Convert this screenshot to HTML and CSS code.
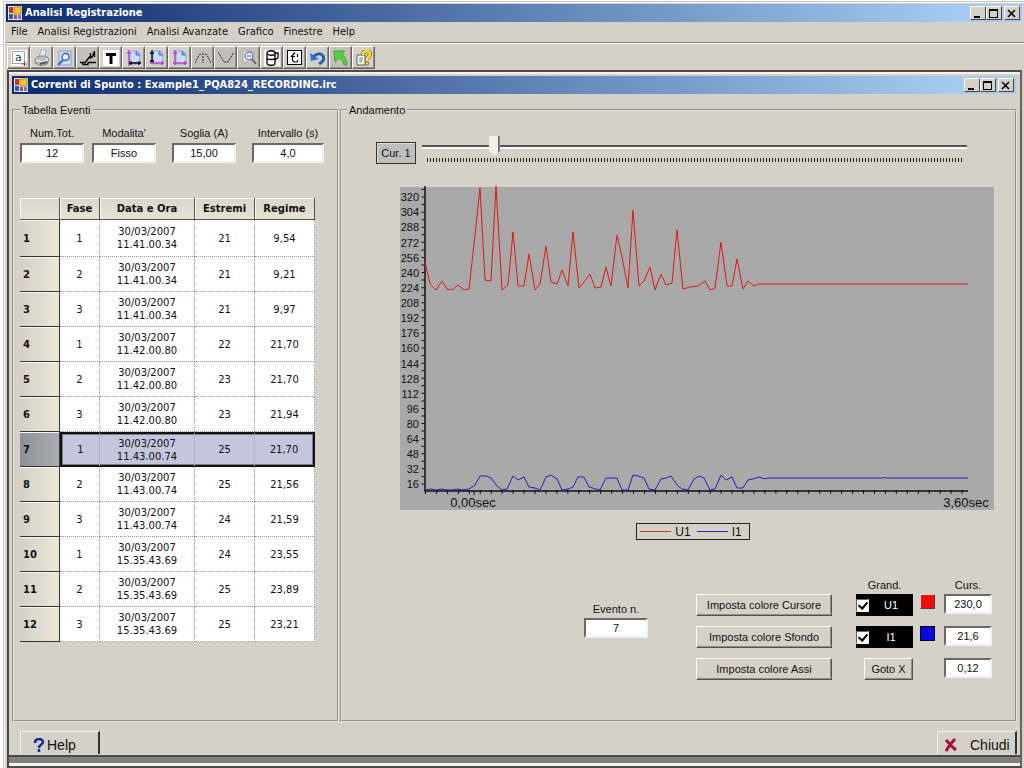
FILE: index.html
```html
<!DOCTYPE html>
<html lang="it">
<head>
<meta charset="utf-8">
<title>Analisi Registrazione</title>
<link rel="stylesheet" href="styles.css">
</head>
<body>
<svg class="defs" aria-hidden="true">
  <symbol id="app-icon" viewBox="0 0 14 14">
    <rect width="14" height="14" fill="#e8e8f0"/>
    <rect x="1" y="1" width="4" height="6" fill="#c8341e"/><rect x="1" y="8" width="4" height="5" fill="#2a57c8"/>
    <rect x="6" y="1" width="7" height="7" fill="#f5c43a" stroke="#b98513"/><rect x="6" y="9" width="3" height="4" fill="#c23a5a"/><rect x="10" y="9" width="3" height="4" fill="#5c77d8"/>
  </symbol>
  <symbol id="min-icon" viewBox="0 0 10 9"><path d="M1 7h6v2H1z"/></symbol>
  <symbol id="max-icon" viewBox="0 0 10 9"><path d="M0 0h9v9H0zM1 2v6h7V2z" fill-rule="evenodd"/></symbol>
  <symbol id="close-icon" viewBox="0 0 10 9"><path d="M1 1l7 7M8 1l-7 7" stroke="#000" stroke-width="1.600" fill="none"/></symbol>
  <symbol id="page-shape" viewBox="0 0 16 16"><path d="M4 1h7l3 3v10H4z" fill="#c8dcfc" stroke="#8fa9e6"/><path d="M10 1v4h4" fill="#6c90e8" stroke="#5878d8"/></symbol>
</svg>
<div class="app">
  <header class="titlebar">
    <svg class="app-icon"><use href="#app-icon"/></svg>
    <h1 class="title">Analisi Registrazione</h1>
    <div class="controls">
      <button class="ctl" aria-label="Riduci"><svg><use href="#min-icon"/></svg></button>
      <button class="ctl" aria-label="Ingrandisci"><svg><use href="#max-icon"/></svg></button>
      <button class="ctl close" aria-label="Chiudi"><svg><use href="#close-icon"/></svg></button>
    </div>
  </header>
  <nav class="menu">
    <button>File</button><button>Analisi Registrazioni</button><button>Analisi Avanzate</button><button>Grafico</button><button>Finestre</button><button>Help</button>
  </nav>
  <div class="toolbar" role="toolbar" aria-label="Strumenti">
    <button class="tool" aria-label="Seleziona"><svg viewBox="0 0 16 16"><rect width="16" height="16" fill="#fff"/><rect x="1.500" y="1.500" width="12" height="12" fill="none" stroke="#334b86" stroke-dasharray="1 1"/><text x="4" y="11" class="glyph-a">a</text><path d="M11 14h5M13.500 11.500v5" stroke="#b03030"/></svg></button>
    <button class="tool" aria-label="Stampa"><svg viewBox="0 0 16 16"><path d="M5 7L7 0h5l-1 7" fill="#e3eaff" stroke="#9aa9d8"/><path d="M1 9l4-3h7l3 3-2 5-5 2-7-3z" fill="#b8bcc4" stroke="#7f858f"/><path d="M2 10l7 2 5-3" fill="none" stroke="#fff"/><path d="M6 14l7-2" stroke="#555" stroke-width="2"/></svg></button>
    <button class="tool" aria-label="Anteprima"><svg viewBox="0 0 16 16"><path d="M2 1h12v14H2z" fill="#cfe2fc" stroke="#7a9fe0"/><path d="M11 1v3h3" stroke="#7a9fe0" fill="#fff"/><circle cx="8.500" cy="7" r="3.500" fill="#eef8ff" stroke="#3867bd" stroke-width="1.500"/><path d="M6 10l-5 5" stroke="#3867bd" stroke-width="2"/></svg></button>
    <button class="tool dim" aria-label="Evento"><svg viewBox="0 0 16 16"><path d="M0 12.500h5l5-6h3M3 12.500v2h5v-2h8M10.500 3v6M12 8l2-6M14.500 1v6" fill="none" stroke="#000" stroke-width="1.300"/></svg></button>
    <button class="tool" aria-label="Testo"><svg viewBox="0 0 16 16"><rect width="16" height="16" fill="#fff"/><path d="M3 3h10v3h-3.500v8h-3V6H3z"/></svg></button>
    <button class="tool" aria-label="Asse X"><svg viewBox="0 0 16 16"><use href="#page-shape"/><path d="M3 0v16M1 3h4" stroke="#c040c8" stroke-width="1.500"/><path d="M3 13h12M5 11v4M13 11v4" stroke="#000" stroke-width="1.300"/></svg></button>
    <button class="tool" aria-label="Asse Y"><svg viewBox="0 0 16 16"><use href="#page-shape"/><path d="M3 0v13M1 3h4M1 11h4" stroke="#000" stroke-width="1.300"/><path d="M1 13h14M13 11v4" stroke="#c040c8" stroke-width="1.500"/></svg></button>
    <button class="tool" aria-label="Assi"><svg viewBox="0 0 16 16"><use href="#page-shape"/><path d="M3 0v15M1 3h4M1 13h14M13 11v4" stroke="#c040c8" stroke-width="1.500"/></svg></button>
    <button class="tool dim" aria-label="Massimo"><svg viewBox="0 0 16 16"><path d="M0 13l4-8 2-1M16 13l-4-8-2-1M8 3v10" fill="none" stroke="#222" stroke-dasharray="2 1"/></svg></button>
    <button class="tool dim" aria-label="Minimo"><svg viewBox="0 0 16 16"><path d="M0 2l6 10h4l6-10" fill="none" stroke="#222" stroke-dasharray="2 1"/></svg></button>
    <button class="tool dim" aria-label="Zoom"><svg viewBox="0 0 16 16"><path d="M2 1h8v11H2z" fill="#eee" stroke="#aaa"/><circle cx="8" cy="6" r="4" fill="#dcecff" stroke="#7186aa" stroke-width="1.500"/><path d="M6 6h4" stroke="#668"/><path d="M11 9l4 5" stroke="#5d6470" stroke-width="2"/></svg></button>
    <button class="tool" aria-label="Memoria"><svg viewBox="0 0 16 16"><rect width="16" height="16" fill="#fff"/><path d="M3 3v10c0 3 8 3 8 0V3M3 3c0-3 8-3 8 0s-8 3-8 0M3 8c0 2 8 2 8 0M11 3h3v5l-3 2" fill="none" stroke="#000" stroke-width="1.300"/></svg></button>
    <button class="tool" aria-label="Strumento"><svg viewBox="0 0 16 16"><rect x=".5" y=".5" width="14" height="14" fill="#fff" stroke="#000"/><path d="M8 2.500L4.500 6.500H8M5.500 6.500v4l1.500 1.500h3l1-2M10.500 4v3" fill="none" stroke="#000" stroke-width="1.200"/></svg></button>
    <button class="tool" aria-label="Annulla"><svg viewBox="0 0 16 16"><path d="M3 7c4-4 8-4 10-1 2 4-1 6-4 8" fill="none" stroke="#1d62b5" stroke-width="3"/><path d="M0 3l1 8 8-2z" fill="#2877cc"/></svg></button>
    <button class="tool dim" aria-label="Torna"><svg viewBox="0 0 16 16"><path d="M1 1h11l-3 3c3 3 5 6 5 11h-3c0-3-2-5-5-7l-4 4z" fill="#52d13c" stroke="#3aa62c"/></svg></button>
    <button class="tool" aria-label="Guida"><svg viewBox="0 0 16 16"><path d="M1 5h8v10H1z" fill="#fff" stroke="#555"/><path d="M3 8h4M3 10h4M3 12h3" stroke="#777"/><path d="M7 5c0-5 7-5 7-1 0 3-3 2-3 6" fill="none" stroke="#806500" stroke-width="4"/><path d="M7 5c0-5 7-5 7-1 0 3-3 2-3 6" fill="none" stroke="#ffe438" stroke-width="2.500"/><circle cx="11" cy="13.500" r="1.700" fill="#ffe438" stroke="#806500"/></svg></button>
  </div>
  <main class="mdi">
    <section class="child">
      <header class="titlebar">
        <svg class="app-icon"><use href="#app-icon"/></svg>
        <h2 class="title">Correnti di Spunto : Example1_PQA824_RECORDING.irc</h2>
        <div class="controls">
          <button class="ctl" aria-label="Riduci"><svg><use href="#min-icon"/></svg></button>
          <button class="ctl" aria-label="Ingrandisci"><svg><use href="#max-icon"/></svg></button>
          <button class="ctl close" aria-label="Chiudi"><svg><use href="#close-icon"/></svg></button>
        </div>
      </header>
      <div class="panels">
        <fieldset class="group">
          <legend>Tabella Eventi</legend>
          <div class="summary">
            <label class="field">Num.Tot.<input value="12" readonly></label>
            <label class="field">Modalita'<input value="Fisso" readonly></label>
            <label class="field spaced">Soglia (A)<input value="15,00" readonly></label>
            <label class="field spaced wide">Intervallo (s)<input value="4,0" readonly></label>
          </div>
          <table class="events">
            <colgroup><col class="c-num"><col class="c-num"><col class="c-date"><col class="c-val"><col class="c-val"></colgroup>
            <thead><tr><td></td><th>Fase</th><th>Data e Ora</th><th>Estremi</th><th>Regime</th></tr></thead>
            <tbody>
              <tr><th>1</th><td>1</td><td>30/03/2007<br>11.41.00.34</td><td>21</td><td>9,54</td></tr>
              <tr><th>2</th><td>2</td><td>30/03/2007<br>11.41.00.34</td><td>21</td><td>9,21</td></tr>
              <tr><th>3</th><td>3</td><td>30/03/2007<br>11.41.00.34</td><td>21</td><td>9,97</td></tr>
              <tr><th>4</th><td>1</td><td>30/03/2007<br>11.42.00.80</td><td>22</td><td>21,70</td></tr>
              <tr><th>5</th><td>2</td><td>30/03/2007<br>11.42.00.80</td><td>23</td><td>21,70</td></tr>
              <tr><th>6</th><td>3</td><td>30/03/2007<br>11.42.00.80</td><td>23</td><td>21,94</td></tr>
              <tr class="selected"><th>7</th><td>1</td><td>30/03/2007<br>11.43.00.74</td><td>25</td><td>21,70</td></tr>
              <tr><th>8</th><td>2</td><td>30/03/2007<br>11.43.00.74</td><td>25</td><td>21,56</td></tr>
              <tr><th>9</th><td>3</td><td>30/03/2007<br>11.43.00.74</td><td>24</td><td>21,59</td></tr>
              <tr><th>10</th><td>1</td><td>30/03/2007<br>15.35.43.69</td><td>24</td><td>23,55</td></tr>
              <tr><th>11</th><td>2</td><td>30/03/2007<br>15.35.43.69</td><td>25</td><td>23,89</td></tr>
              <tr><th>12</th><td>3</td><td>30/03/2007<br>15.35.43.69</td><td>25</td><td>23,21</td></tr>
            </tbody>
          </table>
        </fieldset>
        <fieldset class="group trend">
          <legend>Andamento</legend>
          <div class="cursor-row">
            <label class="cursor-label" for="cursor">Cur. 1</label>
            <div class="slider"><input type="range" id="cursor" min="0" max="200" value="25"><div class="ticks"></div></div>
          </div>
          <svg class="chart" viewBox="400 185 594 325" role="img" aria-label="U1 e I1">
            <rect x="400" y="187" width="594" height="323" fill="#a9a9a9"/>
            <g class="y-labels">
              <text x="419" y="201">320</text><text x="419" y="216">304</text><text x="419" y="231">288</text><text x="419" y="247">272</text><text x="419" y="262">256</text><text x="419" y="277">240</text><text x="419" y="292">224</text><text x="419" y="307">208</text><text x="419" y="322">192</text><text x="419" y="337">176</text><text x="419" y="352">160</text><text x="419" y="368">144</text><text x="419" y="383">128</text><text x="419" y="398">112</text><text x="419" y="413">96</text><text x="419" y="428">80</text><text x="419" y="443">64</text><text x="419" y="458">48</text><text x="419" y="473">32</text><text x="419" y="488">16</text>
            </g>
            <path d="M425 186v305h543" fill="none" stroke="#111" stroke-width="1.500"/>
            <path d="M423 189v302" stroke="#111" stroke-width="3" stroke-dasharray="1 6.550"/>
            <path d="M425 492h544" stroke="#111" stroke-width="4" stroke-dasharray="1 9.950"/>
            <path d="M474 491v4" stroke="#111"/>
            <polyline class="u1" points="425,262 430,284 436,290 442,281 447,289 452,290 458,285 464,290 469,289 475,235 480,188 485,280 491,281 496,186 502,290 508,285 513,232 518,286 524,286 529,254 535,290 540,284 546,246 551,282 557,284 562,270 568,286 573,232 579,288 584,282 590,274 595,288 601,287 606,267 611,286 617,235 622,257 628,288 633,210 639,286 644,281 650,267 655,290 661,274 666,285 672,283 677,230 683,289 690,287 698,286 705,281 710,290 715,288 721,242 727,286 732,286 737,259 743,289 748,281 754,286 758,284 968,284"/>
            <polyline class="i1" points="425,490 431,489 436,490 442,489 447,490 452,490 458,489 463,490 469,489 475,485 480,476 486,476 491,478 497,486 502,490 507,489 513,476 518,480 524,477 529,487 535,488 540,490 546,477 551,475 557,479 562,490 568,489 573,487 578,477 584,477 589,487 600,490 606,478 617,478 622,490 628,490 633,475 638,476 644,478 649,489 655,490 661,479 666,478 671,476 677,485 682,489 688,490 694,479 699,476 704,478 710,490 715,489 721,475 726,480 732,477 737,488 743,488 748,480 753,479 759,477 765,479 768,478 884,478 885,477 886,478 968,478"/>
            <g class="x-labels"><text x="473" y="507">0,00sec</text><text x="966" y="507">3,60sec</text></g>
          </svg>
          <div class="legend"><span class="key red"></span>U1<span class="key blue"></span>I1</div>
          <div class="settings">
            <label class="field event">Evento n.<input value="7" readonly></label>
            <div class="stack colors">
              <button class="btn">Imposta colore Cursore</button>
              <button class="btn">Imposta colore Sfondo</button>
              <button class="btn">Imposta colore Assi</button>
            </div>
            <div class="stack grand">
              <span class="caption">Grand.</span>
              <label class="toggle"><input type="checkbox" checked><span>U1</span></label>
              <label class="toggle"><input type="checkbox" checked><span>I1</span></label>
              <button class="btn goto">Goto X</button>
            </div>
            <div class="stack swatches">
              <button class="swatch red" aria-label="Colore U1"></button>
              <button class="swatch blue" aria-label="Colore I1"></button>
            </div>
            <div class="stack values">
              <span class="caption">Curs.</span>
              <input value="230,0" aria-label="Cursore U1" readonly>
              <input value="21,6" aria-label="Cursore I1" readonly>
              <input value="0,12" aria-label="Posizione X">
            </div>
          </div>
        </fieldset>
      </div>
      <footer class="actions">
        <button class="action"><svg viewBox="0 0 12 14"><path d="M2 5c0-5 8-5 8-1 0 3-4 2-4 6M6 11v3" fill="none" stroke="#0b2c9c" stroke-width="2.500"/></svg>Help</button>
        <button class="action end"><svg viewBox="0 0 14 14"><path d="M2 2c3 3 6 7 10 10M11 1C8 4 4 9 2 13" fill="none" stroke="#a80f32" stroke-width="3"/></svg>Chiudi</button>
      </footer>
    </section>
  </main>
</div>
</body>
</html>
```
FILE: styles.css
```css
* { box-sizing: border-box; }
body { margin: 0; background: #d5d1c9; color: #111; font: 11px/14px "Liberation Sans", Arial, sans-serif; }
button, input { font: inherit; color: inherit; margin: 0; padding: 0; border-radius: 0; }
.defs { position: absolute; width: 0; height: 0; }

.app { display: flex; flex-direction: column; min-height: 100vh; padding: 2px 0 0; border-left: 3px solid #fff; border-top: 1px solid #fff; box-shadow: inset 1px 1px #c9c5bd, inset 2px 2px #fff; }
.titlebar { display: flex; align-items: center; gap: 3px; height: 18px; margin: 1px 2px 0 3px; padding: 0 2px; background: linear-gradient(90deg, #0d2a6c, #a6caf0 94%); color: #fff; }
.app-icon { width: 14px; height: 14px; }
.title { flex: 1; margin: 0; font: bold 11px/16px "DejaVu Sans Condensed", "DejaVu Sans", sans-serif; }
.controls { display: flex; }
.ctl { display: flex; align-items: center; justify-content: center; width: 16px; height: 14px; background: #d5d1c9; border: 1px solid; border-color: #fff #444 #444 #fff; }
.ctl svg { width: 10px; height: 9px; }
.ctl.close { margin-left: 2px; }

.menu { display: flex; gap: 10px; height: 21px; margin-left: 3px; padding-left: 5px; border-bottom: 1px solid #85817a; box-shadow: 0 1px #fff; }
.menu button { background: none; border: 0; font: 11px/18px "DejaVu Sans Condensed", "DejaVu Sans", sans-serif; }
.toolbar { display: flex; padding: 3px 4px 1px; }
.tool { display: flex; align-items: center; justify-content: center; width: 23px; height: 23px; background: #d5d1c9; border: 1px solid; border-color: #fff #66635e #66635e #fff; box-shadow: inset -1px -1px #96928a; }
.tool.dim { background: #c3c0b9; }
.tool svg { width: 16px; height: 16px; }
.glyph-a { font: 11px "DejaVu Sans", sans-serif; fill: #27366e; }

.mdi { display: flex; flex: 1; margin: 0 2px 0 4px; border: 2px solid #4c4a46; border-right-color: #66635e; background: #808080; padding-bottom: 9px; box-shadow: inset 0 -3px #f4f2ee; }
.child { display: flex; flex-direction: column; flex: 1; padding-top: 3px; background: #d5d1c9; box-shadow: inset 0 2px #f4f2ee; border-bottom: 2px solid #4c4a46; }
.child .titlebar { margin: 1px 4px 0 3px; }
.panels { display: grid; grid-template-columns: 327px 1fr; gap: 1px; flex: 1; padding: 9px 3px 0 3px; }
.group { min-width: 0; margin: 0; padding: 0 6px; border: 2px groove #e6e3dc; }
.group legend { margin-left: 0; padding: 0 2px; line-height: 14px; }

input { min-width: 0; width: 100%; height: 20px; padding: 0 2px; background: #fff; border: 2px solid; border-color: #6c6963 #f2f0ea #f2f0ea #6c6963; text-align: center; }
.field { display: flex; flex-direction: column; gap: 3px; width: 64px; text-align: center; }
.field.spaced { margin-left: 8px; }
.field.wide { width: 72px; }
.summary { display: flex; gap: 8px; margin-top: 9px; }

.events { table-layout: fixed; width: 295px; margin-top: 35px; border-collapse: separate; border-spacing: 0; background: #fff; font: 10px/13px "DejaVu Sans", Verdana, sans-serif; text-align: center; }
.c-num { width: 40px; }
.c-date { width: 95px; }
.c-val { width: 60px; }
.events th, .events td { height: 35px; padding: 0; }
.events td { border-right: 1px dotted #999; border-bottom: 1px dotted #999; }
.events thead th, .events thead td { height: 22px; background: linear-gradient(#d9d6cd, #e6e3d4); border: 0; border-right: 1px solid #55534e; border-bottom: 1px solid #55534e; box-shadow: inset 1px 1px #f8f7f2; }
.events tbody th { padding-left: 3px; text-align: left; background: linear-gradient(90deg, #d5d1c9, #eae7d6); border-right: 1px solid #333; border-bottom: 1px solid #333; box-shadow: inset 0 1px #f8f7f2; }
.events tbody tr:first-child > * { height: 37px; }
.events .selected th { background: linear-gradient(90deg, #8d9096, #abadb2); }
.events .selected td { background: #c3c6dc; border-top: 2px solid #111; border-bottom: 2px solid #111; box-shadow: inset 0 1px #777a88, inset 0 -1px #777a88; }
.events .selected td:nth-child(2) { border-left: 2px solid #111; box-shadow: inset 1px 1px #777a88, inset 0 -1px #777a88; }
.events .selected td:last-child { border-right: 2px solid #111; box-shadow: inset -1px 1px #777a88, inset 0 -1px #777a88; }

.trend { display: flex; flex-direction: column; padding: 0 21px 0 58px; }
.trend legend { margin-left: -53px; }
.cursor-row { display: flex; gap: 6px; margin: 18px 27px 0 -24px; }
.cursor-label { align-self: end; width: 40px; padding: 3px 0; border: 1px solid #333; background: #bfbebf; text-align: center; box-shadow: inset 1px 1px #ddd; }
.slider { flex: 1; padding-bottom: 2px; }
.slider input { display: block; height: 22px; appearance: none; padding: 0; border: 0; background: linear-gradient(#555, #555) 0 10px / 100% 2px no-repeat, linear-gradient(#fff, #fff) 0 12px / 100% 2px no-repeat; }
.slider input::-webkit-slider-thumb { appearance: none; width: 11px; height: 20px; background: #f1efe9; border-right: 2px solid #666; clip-path: polygon(0 0, 100% 0, 100% 75%, 50% 100%, 0 75%); }
.ticks { height: 4px; margin: 1px 4px 0 5px; background: repeating-linear-gradient(90deg, #222 0 1px, transparent 1px 3px); }
.chart { display: block; width: 100%; height: auto; margin-top: 21px; }
.chart text { font: 11px "Liberation Sans", Arial, sans-serif; fill: #111; }
.y-labels { text-anchor: end; }
.x-labels { text-anchor: middle; }
.chart .x-labels text { font-size: 13px; }
.u1, .i1 { fill: none; stroke-width: 1; }
.u1 { stroke: #e01818; }
.i1 { stroke: #2020b8; }
.legend { display: flex; align-items: center; align-self: center; gap: 4px; height: 17px; margin-top: 13px; margin-left: -8px; padding: 0 7px 0 3px; border: 1px solid #222; font-size: 12px; }
.key { width: 31px; height: 1px; }
.key + .key { margin-left: 4px; }
.key.red { background: #d83028; }
.key.blue { background: #2828b8; margin-left: 2px; }

.settings { display: flex; justify-content: flex-end; align-items: flex-start; margin: 38px 2px 34px 0; }
.event { margin: 24px 48px 0 0; gap: 2px; }
.stack { display: flex; flex-direction: column; gap: 10px; }
.btn { height: 22px; background: #d5d1c9; border: 1px solid; border-color: #fff #55534e #55534e #fff; box-shadow: inset -1px -1px #908c84; }
.colors { width: 136px; margin: 16px 24px 0 0; }
.caption { height: 14px; margin-bottom: -8px; text-align: center; }
.grand { width: 57px; margin-right: 7px; }
.toggle { display: flex; align-items: center; height: 22px; background: #000; color: #fff; text-align: center; }
.toggle span { flex: 1; }
.toggle input { display: grid; place-items: center; appearance: none; width: 13px; height: 13px; padding: 0; border-width: 1px; color: #000; }
.toggle input:checked::before { content: ""; width: 4px; height: 7px; margin-top: -2px; border: solid #000; border-width: 0 2px 2px 0; transform: rotate(40deg); }
.goto { align-self: flex-end; width: 49px; }
.swatches { gap: 17px; margin: 16px 9px 0 0; }
.swatch { width: 15px; height: 15px; border: 1px solid; border-color: #f2d6d0 #444 #444 #f2d6d0; }
.swatch.red { background: #f40c0c; }
.swatch.blue { background: #0808e4; border-color: #000; }
.values { width: 48px; gap: 12px; }
.values .caption { margin-bottom: -10px; }

.actions { display: flex; justify-content: space-between; align-items: flex-end; height: 33px; padding: 0 3px 1px 11px; }
.action { display: flex; align-items: center; gap: 2px; width: 80px; height: 23px; padding: 4px 0 0 12px; background: none; border: 1px solid #f2f0ea; border-right: 2px solid #333; border-bottom: 0; font-size: 14px; }
.action svg { width: 12px; height: 14px; }
.action.end { gap: 12px; padding-left: 6px; }
.action.end svg { width: 14px; }
```
